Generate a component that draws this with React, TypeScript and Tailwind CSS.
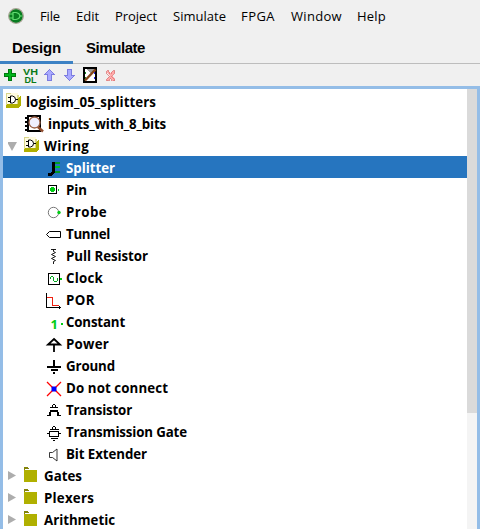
import { useLayoutEffect, useRef } from "react";
import type { ReactNode } from "react";

const G = "#00cc14";

/** Text whose letter spacing is adjusted so that it spans the given width. */
function Label({ text, width, className = "" }: { text: string; width: number; className?: string }) {
  const ref = useRef<HTMLSpanElement>(null);
  useLayoutEffect(() => {
    const el = ref.current;
    if (!el) return;
    el.style.letterSpacing = "0px";
    const natural = el.getBoundingClientRect().width;
    el.style.letterSpacing = `${(width - natural) / text.length}px`;
  }, [text, width]);
  return (
    <span ref={ref} className={`inline-block whitespace-pre ${className}`}>
      {text}
    </span>
  );
}

function Icon({ children, smooth = false }: { children: ReactNode; smooth?: boolean }) {
  return (
    <svg width="22" height="22" viewBox="0 0 22 22" fill="none" stroke="#000" shapeRendering={smooth ? "auto" : "crispEdges"} className="shrink-0">
      {children}
    </svg>
  );
}

const openFolder = (
  <Icon>
    <path d="M2 3h12v13H2z" fill="#fffbe0" stroke="none" />
    <path d="M2 3h5v1H3v12H2zM13 5h2v10h-2z" fill="#d9d68c" stroke="none" />
    <path d="M2 15L4 14H14V8l3-2V15l-2 3H2z" fill="#b0b000" stroke="none" />
    <path d="M4 7.500h3M4 11.500h3M11 9.500h3" />
    <path d="M6.500 6h2q3 .5 3 3.500t-3 3.500h-2z" fill="#fff" shapeRendering="auto" />
  </Icon>
);

const closedFolder = (
  <Icon>
    <path d="M2 6h13v12H2z" fill="#b0b000" stroke="none" />
    <path d="M2 3h4v1h1v1H3v1H2z" fill="#84840a" stroke="none" />
  </Icon>
);

const circuit = (
  <Icon smooth>
    <path d="M5 4h12v15H5z" fill="#fff" strokeWidth="2" />
    <path d="M2 6h3M2 10h3M2 14h3M2 18h3" strokeWidth="1.800" />
    <path d="M14.500 14.500l5.500 5" stroke="#8e4b2c" strokeWidth="2.500" />
    <circle cx="11.500" cy="10.500" r="5.500" fill="#f0f0ff" stroke="#9a6047" strokeWidth="1.300" />
  </Icon>
);

const wiring: { name: string; width: number; icon: ReactNode }[] = [
  { name: "Splitter", width: 49, icon: (
    <Icon>
      <path d="M8 6h3v10l-3 4H4v-3h3l1-2z" fill="#000" stroke="none" />
      <path d="M11 7h5M11 16h5" stroke="#009a26" strokeWidth="2" />
      <path d="M11 11h5" stroke="#00c424" strokeWidth="2" />
    </Icon>) },
  { name: "Pin", width: 21, icon: (
    <Icon>
      <path d="M4.500 7.500h8v8h-8z" />
      <path d="M7 9h3v5H7zM6 10h5v3H6zM14 11h1v2h-1z" fill={G} stroke="none" />
    </Icon>) },
  { name: "Probe", width: 41, icon: (
    <Icon smooth>
      <circle cx="9.500" cy="12.500" r="5.200" stroke="#777" />
      <circle cx="15" cy="12.500" r="1.700" fill={G} stroke="none" />
    </Icon>) },
  { name: "Tunnel", width: 44, icon: <Icon smooth><path d="M5.500 9.500h11v6h-11l-3-3z" /></Icon> },
  { name: "Pull Resistor", width: 82, icon: (
    <Icon smooth><path d="M7 5.500h5M9.500 5.500v2l2 1-4 2 4 2-4 2 4 2-2 1v2.500" strokeWidth=".9" /></Icon>) },
  { name: "Clock", width: 37, icon: (
    <Icon>
      <path d="M4.500 7.500h11v11h-11z" />
      <path d="M6.500 13v-2M7 10.500h2M9.500 11v4M10 15.500h3M13.500 15v-3" stroke="#00a81c" />
      <path d="M16 12h2v2h-2z" fill={G} stroke="none" />
    </Icon>) },
  { name: "POR", width: 29, icon: (
    <Icon>
      <path d="M2.500 5v15M2 19.500h15M15.500 18v3" />
      <path d="M3 9.500h5.500v8H15" stroke="#f02010" />
    </Icon>) },
  { name: "Constant", width: 59, icon: (
    <Icon smooth>
      <text x="6.500" y="19" fontSize="13" stroke="none" fill={G} className="font-['Open_Sans',sans-serif] font-bold">1</text>
      <path d="M17 13h2v2h-2z" fill={G} stroke="none" />
    </Icon>) },
  { name: "Power", width: 43, icon: (
    <Icon smooth><path d="M10 7l6 5.500H4zM10 12v8" strokeWidth="1.800" /></Icon>) },
  { name: "Ground", width: 49, icon: (
    <Icon><path d="M10 6v7M3 13h14M7 16h7M9 19h2" strokeWidth="2" /></Icon>) },
  { name: "Do not connect", width: 102, icon: (
    <Icon smooth>
      <path d="M3 6l14 14M17 6L3 20" stroke="#f00" strokeWidth="1.300" />
      <path d="M8 11h4v4H8z" fill="#00f" stroke="#00f" strokeLinejoin="round" />
    </Icon>) },
  { name: "Transistor", width: 66, icon: (
    <Icon>
      <path d="M9 6h2v1h1v2H8V7h1zM6 9h8v1H6zM6 12h8v2h1v3h2v1h-4v-4H7v4H3v-1h2v-3h1z" fill="#000" stroke="none" />
      <path d="M9 7h2v2H9z" fill="#fff" stroke="none" />
    </Icon>) },
  { name: "Transmission Gate", width: 121, icon: (
    <Icon>
      <path d="M5.500 11.500h9v5h-9zM3 13.500h2M15 13.500h2M6 9.500h9M8.500 9v-2M9 6.500h2M11.500 7v2M7 18.500h7M9 20h2" />
    </Icon>) },
  { name: "Bit Extender", width: 81, icon: (
    <Icon smooth><path d="M5.500 10.500h3l4.500-3.500v12l-4.500-3.500h-3z" strokeWidth=".9" stroke="#222" /></Icon>) },
];

const menus = [
  { name: "File", x: "w-[36px]", width: 20 },
  { name: "Edit", x: "w-[39px]", width: 23 },
  { name: "Project", x: "w-[58px]", width: 42 },
  { name: "Simulate", x: "w-[68px]", width: 53 },
  { name: "FPGA", x: "w-[50px]", width: 34 },
  { name: "Window", x: "w-[66px]", width: 51 },
  { name: "Help", x: "w-[40px]", width: 29 },
];

function Toolbar() {
  return (
    <div className="h-[22px] shrink-0">
      <svg width="130" height="22" viewBox="0 64 130 22" shapeRendering="crispEdges">
        <path d="M8 69h4v4h4v4h-4v4H8v-4H4v-4h4z" fill="#007a10" />
        <path d="M9 70h2v4h4v2h-4v4H9v-4H5v-2h4z" fill="#00b51c" />
        <g className="font-['Liberation_Sans',sans-serif] font-bold" fill="#087a18" fontSize="9.500">
          <text x="23" y="74.500" textLength="15" lengthAdjust="spacingAndGlyphs">VH</text>
          <text x="24.500" y="83" textLength="12" lengthAdjust="spacingAndGlyphs">DL</text>
        </g>
        <path d="M49.500 69.500l5 5h-3v6h-4v-6h-3z" fill="#a9a9ff" stroke="#7d7de0" />
        <path d="M69.500 80.500l5-5h-3v-6h-4v6h-3z" fill="#a9a9ff" stroke="#7d7de0" />
        <path d="M84 68h12v14H84z" fill="#fff" stroke="#000" strokeWidth="2" />
        <path d="M85 72h1v2h-1zM85 77h1v2h-1z" fill="#148620" />
        <path d="M94 72h1v2h-1zM94 77h1v2h-1z" fill="#2020f0" />
        <path d="M87 69h8l-4 5z" fill="#999" />
        <path d="M85 80.500L95.500 69.500" stroke="#854619" strokeWidth="2.500" shapeRendering="auto" />
        <path d="M106.500 70.500h2l2 3 2-3h2v2l-3 3 3 3v2h-2l-2-3-2 3h-2v-2l3-3-3-3z" fill="#ffaaaa" stroke="#dd7b7b" strokeWidth=".8" />
      </svg>
    </div>
  );
}

export default function App() {
  return (
    <div className="flex h-[529px] w-[480px] flex-col overflow-hidden bg-[#f0f0f0] font-['Open_Sans','Noto_Sans',sans-serif] text-black">
      <div className="flex h-8 shrink-0 items-center">
        <div className="w-10 shrink-0 pl-2">
          <svg width="16" height="16" viewBox="0 0 16 16" fill="none">
            <circle cx="8" cy="8" r="7.300" fill="#087c20" stroke="#a8a595" strokeWidth="1.300" />
            <path d="M5 4.500h3q3.500.5 4 3.500-.5 3-4 3.500H5z" stroke="#60dc70" strokeWidth="1.200" />
            <path d="M1.500 6H5M1.500 10H5M12 8h2.500" stroke="#60dc70" />
          </svg>
        </div>
        {menus.map((m) => (
          <div key={m.name} className={`shrink-0 ${m.x}`}>
            <Label text={m.name} width={m.width} className="text-[13px] leading-8" />
          </div>
        ))}
      </div>
      <div className="flex h-8 shrink-0 border-b border-[#bdbdbd] font-['Liberation_Sans',Arial,sans-serif] text-[15px] font-bold leading-8">
        <div className="h-8 w-[73px] border-b-[3px] border-[#3d82c4] pl-3">
          <Label text="Design" width={49} />
        </div>
        <div className="pl-[13px]">
          <Label text="Simulate" width={59} />
        </div>
      </div>
      <Toolbar />
      <div className="flex h-[443px] shrink-0 border-x-[3px] border-t-[3px] border-[#94bde7]">
        <div className="flex-1 overflow-hidden bg-white pt-px text-[13.3px] font-bold leading-6">
          <div className="flex h-[22px] pl-px">
            {openFolder}
            <Label text="logisim_05_splitters" width={130} />
          </div>
          <div className="flex h-[22px] pl-5">
            {circuit}
            <span className="pl-[3px]"><Label text="inputs_with_8_bits" width={118} /></span>
          </div>
          <div className="flex h-[22px] pl-[5px]">
            <svg width="14" height="22"><path d="M-1 8h10l-5 9z" fill="#adadad" /></svg>
            {openFolder}
            <Label text="Wiring" width={45} />
          </div>
          {wiring.map((w, i) => (
            <div key={w.name} className={`flex h-[22px] pl-[41px] ${i === 0 ? "bg-[#2675bf] text-white" : ""}`}>
              {w.icon}
              <Label text={w.name} width={w.width} />
            </div>
          ))}
          {[["Gates", 38], ["Plexers", 50], ["Arithmetic", 71]].map(([name, width]) => (
            <div key={name} className="flex h-[22px] pl-[5px]">
              <svg width="14" height="22"><path d="M0 7l8 4.500-8 4.500z" fill="#adadad" /></svg>
              {closedFolder}
              <Label text={String(name)} width={Number(width)} />
            </div>
          ))}
        </div>
        <div className="w-[10px] bg-[#f4f4f4]">
          <div className="h-[324px] bg-[#dadada]" />
        </div>
      </div>
    </div>
  );
}
